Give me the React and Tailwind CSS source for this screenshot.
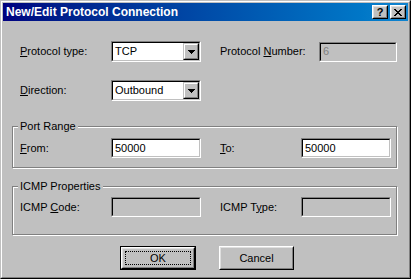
import React from "react";

function Sunken({ w, disabled, children }) {
  return (
    <div className={`${w} h-[20px] border border-t-[#808080] border-l-[#808080] border-b-white border-r-white`}>
      <div
        className={`h-full border border-t-black border-l-black border-b-[#c0c0c0] border-r-[#c0c0c0] flex items-center pl-[2px] ${
          disabled ? "bg-[#c0c0c0] text-[#808080]" : "bg-white text-black"
        }`}
      >
        {children}
      </div>
    </div>
  );
}

function Combo({ value }) {
  return (
    <div className="w-[90px] h-[21px] border border-t-[#808080] border-l-[#808080] border-b-white border-r-white">
      <div className="h-full border border-t-black border-l-black border-b-[#c0c0c0] border-r-[#c0c0c0] bg-white flex items-center">
        <span className="flex-1 pl-[2px]">{value}</span>
        <div className="w-[16px] h-[17px] border border-t-[#c0c0c0] border-l-[#c0c0c0] border-b-black border-r-black">
          <div className="h-full border border-t-white border-l-white border-b-[#808080] border-r-[#808080] bg-[#c0c0c0] flex items-center justify-center">
            <svg width="7" height="4" viewBox="0 0 7 4">
              <path d="M0 0h7v1H0zM1 1h5v1H1zM2 2h3v1H2zM3 3h1v1H3z" fill="#000" />
            </svg>
          </div>
        </div>
      </div>
    </div>
  );
}

function Button({ children, def, w }) {
  const inner = (
    <div className="h-full border border-t-white border-l-white border-b-black border-r-black">
      <div className="h-full border border-t-[#dfdfdf] border-l-[#dfdfdf] border-b-[#808080] border-r-[#808080] flex items-center justify-center p-[2px]">
        {def ? (
          <div className="w-full h-full border border-dotted border-black flex items-center justify-center">{children}</div>
        ) : (
          children
        )}
      </div>
    </div>
  );
  return def ? (
    <div className={`${w} h-[24px] border border-black`}>{inner}</div>
  ) : (
    <div className={`${w} h-[24px]`}>{inner}</div>
  );
}

export default function App() {
  return (
    <div
      className="w-[411px] h-[279px] bg-[#c0c0c0] text-[11px] text-black leading-none"
      style={{ fontFamily: '"Liberation Sans", Arial, sans-serif' }}
    >
      <div className="w-full h-full border border-t-[#c0c0c0] border-l-[#c0c0c0] border-b-black border-r-black">
        <div className="w-full h-full border border-t-white border-l-white border-b-[#808080] border-r-[#808080] p-[1px] flex flex-col">
          {/* Title bar */}
          <div className="h-[18px] bg-linear-to-r from-[#000080] to-[#1084d0] flex items-center pl-[3px] pr-[2px]">
            <span className="flex-1 text-white font-bold text-[12px]">New/Edit Protocol Connection</span>
            <div className="w-[16px] h-[14px] border border-t-white border-l-white border-b-black border-r-black">
              <div className="h-full border border-t-[#dfdfdf] border-l-[#dfdfdf] border-b-[#808080] border-r-[#808080] bg-[#c0c0c0] flex items-center justify-center font-bold text-[11px]">
                ?
              </div>
            </div>
            <div className="w-[16px] h-[14px] ml-[2px] border border-t-white border-l-white border-b-black border-r-black">
              <div className="h-full border border-t-[#dfdfdf] border-l-[#dfdfdf] border-b-[#808080] border-r-[#808080] bg-[#c0c0c0] flex items-center justify-center">
                <svg width="8" height="7" viewBox="0 0 8 7">
                  <path
                    d="M0 0h2v1H0zM6 0h2v1H6zM1 1h2v1H1zM5 1h2v1H5zM2 2h4v1H2zM3 3h2v1H3zM2 4h4v1H2zM1 5h2v1H1zM5 5h2v1H5zM0 6h2v1H0zM6 6h2v1H6z"
                    fill="#000"
                  />
                </svg>
              </div>
            </div>
          </div>

          {/* Row 1 */}
          <div className="mt-[20px] flex items-center pl-[17px] h-[21px]">
            <span className="w-[91px]">
              <u>P</u>rotocol type:
            </span>
            <Combo value="TCP" />
            <span className="ml-[19px] w-[99px]">
              Protocol <u>N</u>umber:
            </span>
            <Sunken w="w-[78px]" disabled>
              6
            </Sunken>
          </div>

          {/* Row 2 */}
          <div className="mt-[18px] flex items-center pl-[17px] h-[21px]">
            <span className="w-[91px]">
              <u>D</u>irection:
            </span>
            <Combo value="Outbound" />
          </div>

          {/* Port Range */}
          <div className="relative mt-[25px] ml-[9px] w-[385px] h-[42px] border border-[#808080] shadow-[inset_1px_1px_0_#fff,1px_1px_0_#fff] pt-[11px] pl-[7px]">
            <span className="absolute left-[5px] top-[-6px] px-[2px] bg-[#c0c0c0]">Port Range</span>
            <div className="flex items-center">
              <span className="w-[91px]">
                <u>F</u>rom:
              </span>
              <Sunken w="w-[90px]">50000</Sunken>
              <span className="ml-[19px] w-[81px]">
                <u>T</u>o:
              </span>
              <Sunken w="w-[90px]">50000</Sunken>
            </div>
          </div>

          {/* ICMP Properties */}
          <div className="relative mt-[18px] ml-[9px] w-[385px] h-[49px] border border-[#808080] shadow-[inset_1px_1px_0_#fff,1px_1px_0_#fff] pt-[10px] pl-[7px]">
            <span className="absolute left-[5px] top-[-6px] px-[2px] bg-[#c0c0c0]">ICMP Properties</span>
            <div className="flex items-center">
              <span className="w-[91px]">
                ICMP <u>C</u>ode:
              </span>
              <Sunken w="w-[90px]" disabled />
              <span className="ml-[19px] w-[81px]">
                ICMP T<u>y</u>pe:
              </span>
              <Sunken w="w-[90px]" disabled />
            </div>
          </div>

          {/* Buttons */}
          <div className="mt-[11px] flex pl-[117px]">
            <Button def w="w-[76px]">OK</Button>
            <div className="ml-[23px]">
              <Button w="w-[75px]">Cancel</Button>
            </div>
          </div>
        </div>
      </div>
    </div>
  );
}
